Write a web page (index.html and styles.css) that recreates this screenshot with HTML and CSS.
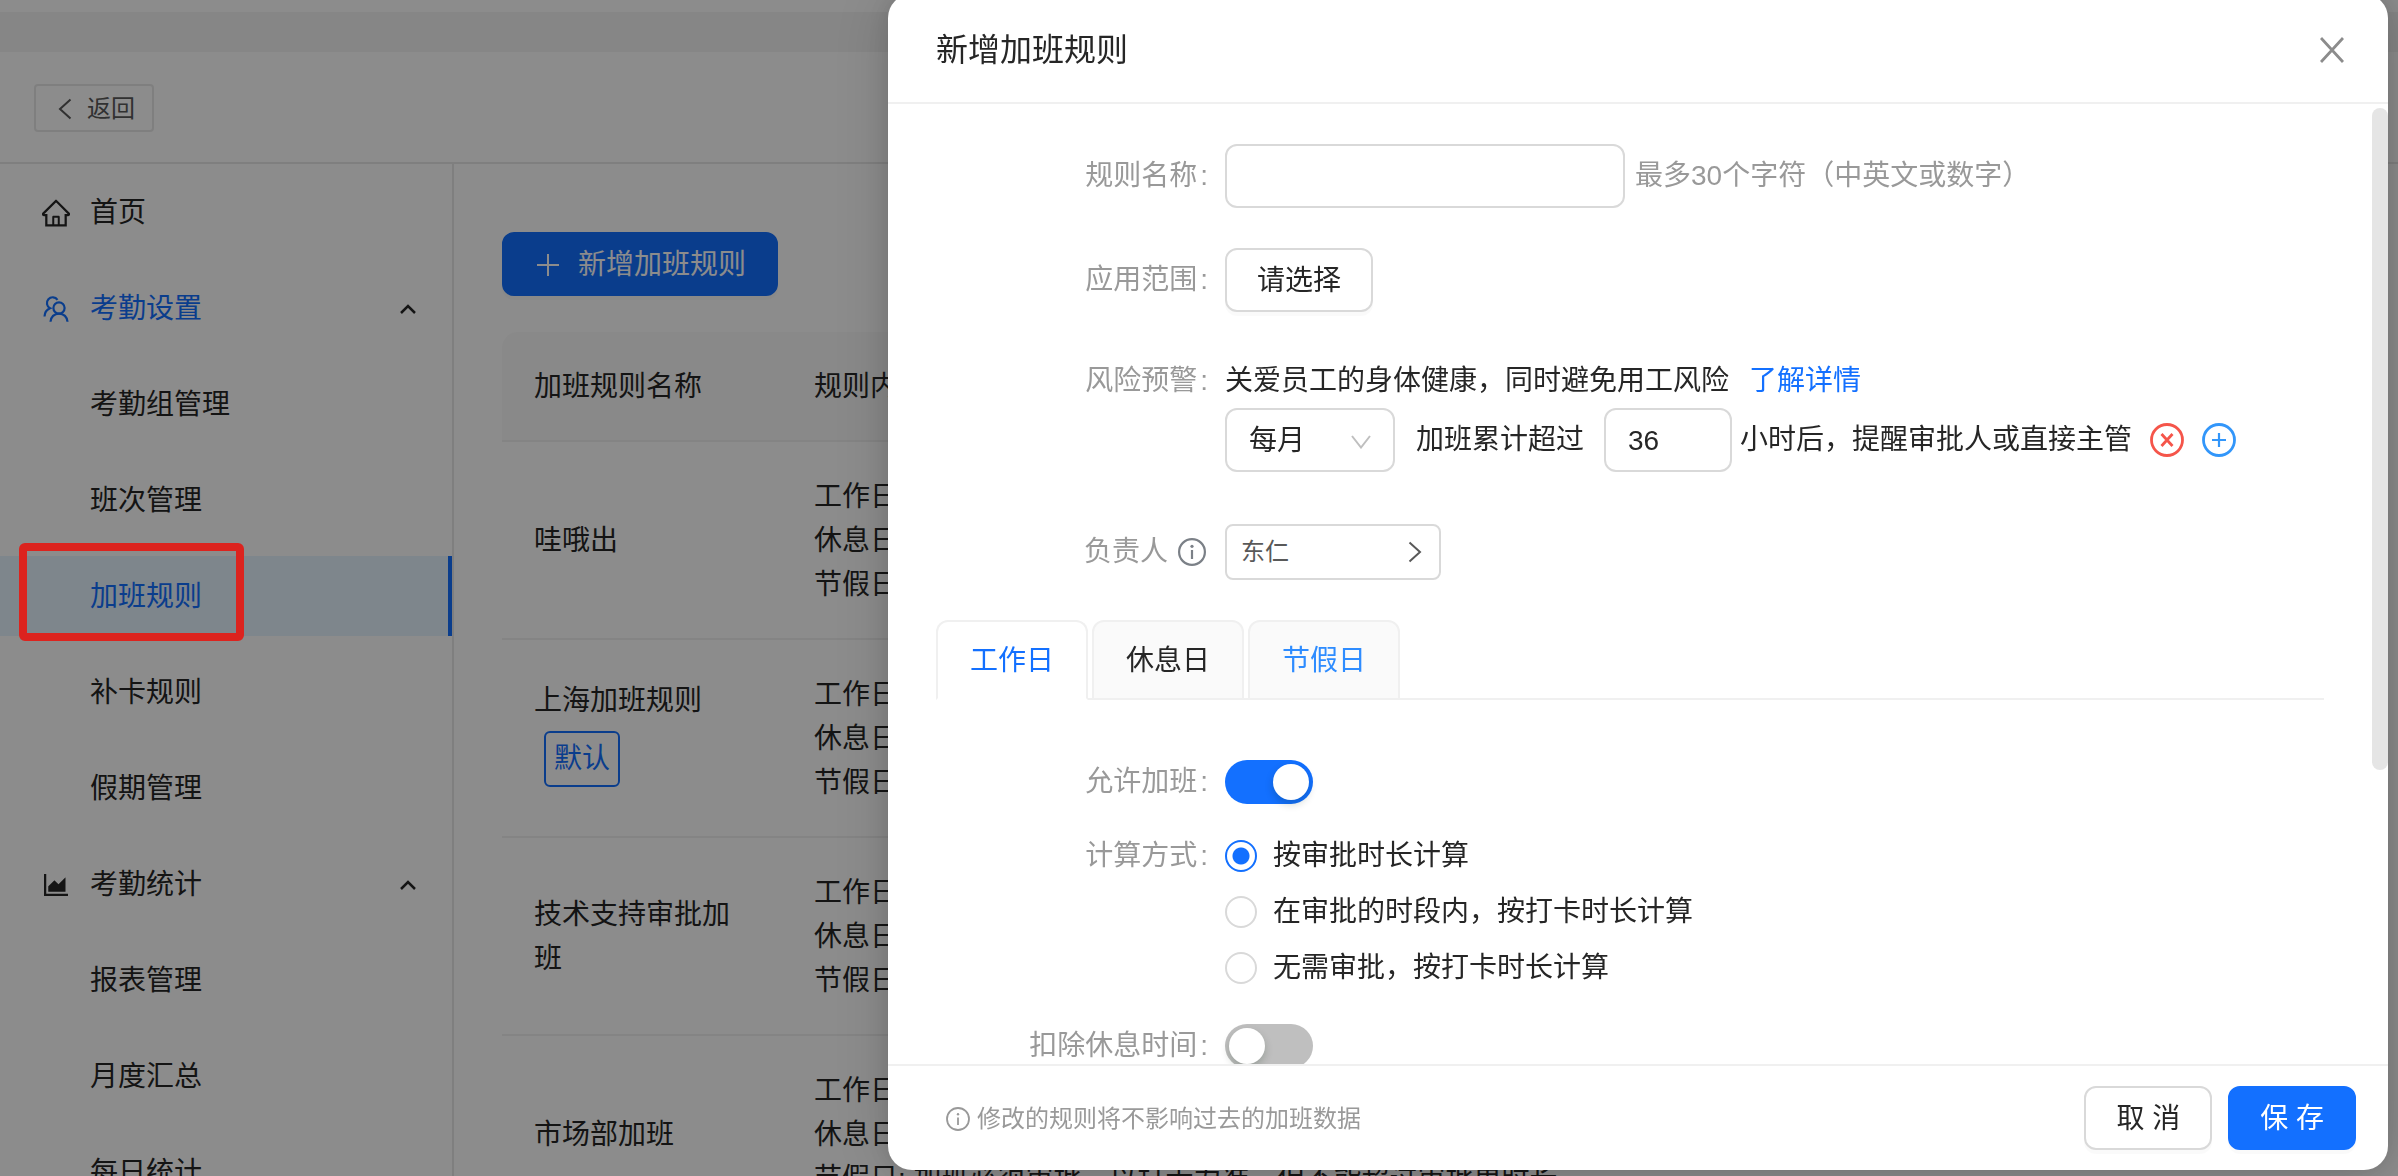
FILE: index.html
```html
<!DOCTYPE html>
<html lang="zh-CN">
<head>
<meta charset="utf-8">
<meta name="viewport" content="width=device-width, initial-scale=1">
<title>新增加班规则</title>
<link rel="stylesheet" href="styles.css">
</head>
<body>
<div class="app">
  <div class="app-strip"></div>
  <header class="app-header">
    <button class="back-btn" type="button">
      <svg width="14" height="22" viewBox="0 0 14 22" fill="none" stroke="currentColor" stroke-width="2"><path d="M12.500 1.500 2 11l10.500 9.500"/></svg>
      <span>返回</span>
    </button>
  </header>
  <div class="app-main">
    <nav class="sidebar">
      <a class="menu-item" href="#">
        <svg class="menu-icon" viewBox="64 64 896 896" fill="currentColor"><path d="M946.5 505L560.1 118.800l-25.900-25.900a31.500 31.500 0 0 0-44.400 0L77.500 505a63.900 63.900 0 0 0-18.800 46c.4 35.200 29.700 63.300 64.900 63.300h42.500V940h691.800V614.300h43.400c17.100 0 33.200-6.700 45.300-18.800a63.600 63.600 0 0 0 18.700-45.300c0-17-6.700-33.100-18.800-45.200zM568 868H456V664h112v204zm217.900-325.700V868H632V640c0-22.100-17.900-40-40-40H432c-22.100 0-40 17.900-40 40v228H238.100V542.300h-96l370-369.700 23.100 23.100L882 542.300h-96.100z"/></svg>
        <span>首页</span>
      </a>
      <a class="menu-item menu-open" href="#">
        <svg class="menu-icon" viewBox="0 0 28 28" fill="none" stroke="currentColor" stroke-width="2.200"><path d="M15.500 4.800A5.800 5.800 0 1 0 8 13.200C4.800 14.500 2.700 17.300 2.500 21.500"/><circle cx="17" cy="13" r="5.600"/><path d="M8.500 26.800c.3-4.800 3.700-8.200 8.500-8.200s8.200 3.400 8.500 8.200"/></svg>
        <span>考勤设置</span>
        <svg class="menu-arrow" viewBox="0 0 16 10" fill="none" stroke="currentColor" stroke-width="2.500"><path d="m1 9 7-7 7 7"/></svg>
      </a>
      <a class="menu-item menu-sub" href="#">考勤组管理</a>
      <a class="menu-item menu-sub" href="#">班次管理</a>
      <a class="menu-item menu-sub menu-selected" href="#">加班规则</a>
      <a class="menu-item menu-sub" href="#">补卡规则</a>
      <a class="menu-item menu-sub" href="#">假期管理</a>
      <a class="menu-item" href="#">
        <svg class="menu-icon" viewBox="64 64 896 896" fill="currentColor"><path d="M888 792H200V168c0-4.400-3.600-8-8-8h-56c-4.400 0-8 3.600-8 8v688c0 4.400 3.600 8 8 8h752c4.400 0 8-3.600 8-8v-56c0-4.400-3.600-8-8-8zm-616-64h536c4.400 0 8-3.600 8-8V284c0-7.200-8.700-10.700-13.700-5.700L592 488.600l-125.400-124a8.030 8.030 0 0 0-11.300 0l-189 189.600a7.870 7.870 0 0 0-2.300 5.600V720c0 4.400 3.600 8 8 8z"/></svg>
        <span>考勤统计</span>
        <svg class="menu-arrow" viewBox="0 0 16 10" fill="none" stroke="currentColor" stroke-width="2.500"><path d="m1 9 7-7 7 7"/></svg>
      </a>
      <a class="menu-item menu-sub" href="#">报表管理</a>
      <a class="menu-item menu-sub" href="#">月度汇总</a>
      <a class="menu-item menu-sub" href="#">每日统计</a>
    </nav>
    <main class="content">
      <button class="btn btn-primary add-btn" type="button">
        <svg width="24" height="24" viewBox="0 0 24 24" fill="none" stroke="currentColor" stroke-width="2"><path d="M12 1v22M1 12h22"/></svg>
        <span>新增加班规则</span>
      </button>
      <table class="rules">
        <thead>
          <tr><th class="col-name">加班规则名称</th><th>规则内容</th></tr>
        </thead>
        <tbody>
          <tr><td>哇哦出</td><td>工作日: 加班必须审批<br>休息日: 加班必须审批<br>节假日: 加班必须审批</td></tr>
          <tr><td>上海加班规则<span class="tag">默认</span></td><td>工作日: 加班必须审批<br>休息日: 加班必须审批<br>节假日: 加班必须审批</td></tr>
          <tr><td>技术支持审批加班</td><td>工作日: 加班必须审批<br>休息日: 加班必须审批<br>节假日: 加班必须审批</td></tr>
          <tr><td>市场部加班</td><td>工作日: 加班必须审批<br>休息日: 加班必须审批<br>节假日: 加班必须审批，以打卡为准，但不能超过审批单时长</td></tr>
        </tbody>
      </table>
    </main>
  </div>
</div>
<div class="mask"></div>
<div class="highlight"></div>

<section class="drawer" role="dialog" aria-labelledby="drawer-title">
  <header class="drawer-header">
    <h1 id="drawer-title">新增加班规则</h1>
    <button class="close-btn" type="button" aria-label="关闭">
      <svg width="24" height="26" viewBox="0 0 24 26" fill="none" stroke="currentColor" stroke-width="2.800"><path d="m1 1 22 24M23 1 1 25"/></svg>
    </button>
  </header>
  <form class="drawer-body">
    <div class="form-row row-name">
      <label class="form-label" for="rule-name">规则名称<span class="colon">:</span></label>
      <div class="form-control">
        <input class="field name-field" id="rule-name" type="text" maxlength="30">
        <span class="hint">最多30个字符（中英文或数字）</span>
      </div>
    </div>
    <div class="form-row row-scope">
      <label class="form-label" for="scope">应用范围<span class="colon">:</span></label>
      <div class="form-control"><button class="btn" id="scope" type="button">请选择</button></div>
    </div>
    <div class="form-row row-risk">
      <span class="form-label">风险预警<span class="colon">:</span></span>
      <div class="risk">
        <p>关爱员工的身体健康，同时避免用工风险<a class="learn-more" href="#">了解详情</a></p>
        <div class="risk-line">
          <div class="select-wrap">
            <select class="field period" aria-label="周期"><option>每月</option></select>
            <svg class="select-arrow" width="20" height="14" viewBox="0 0 20 14" fill="none" stroke="currentColor" stroke-width="2"><path d="m1 1 9 11.500L19 1"/></svg>
          </div>
          <label for="hours">加班累计超过</label>
          <input class="field hours" id="hours" type="text" value="36">
          <span class="risk-tail">小时后，提醒审批人或直接主管</span>
          <button class="icon-btn icon-remove" type="button" aria-label="删除">
            <svg width="34" height="34" viewBox="0 0 34 34" fill="none" stroke="currentColor" stroke-width="2.800"><circle cx="17" cy="17" r="15.500"/><path d="m11.500 11 11 12M22.500 11l-11 12"/></svg>
          </button>
          <button class="icon-btn icon-add" type="button" aria-label="添加">
            <svg width="34" height="34" viewBox="0 0 34 34" fill="none" stroke="currentColor" stroke-width="2.800"><circle cx="17" cy="17" r="15.500"/><path d="M17 10v14M10 17h14" stroke-width="2.200"/></svg>
          </button>
        </div>
      </div>
    </div>
    <div class="form-row row-owner">
      <label class="form-label" for="owner">负责人
        <svg class="owner-info" width="28" height="28" viewBox="0 0 28 28" fill="none" stroke="currentColor" stroke-width="2.200"><circle cx="14" cy="14" r="12.900"/><path d="M14 12v9"/><circle cx="14" cy="8.300" r="1.600" fill="currentColor" stroke="none"/></svg>
      </label>
      <div class="form-control">
        <button class="owner-btn" id="owner" type="button"><span>东仁</span>
          <svg width="14" height="22" viewBox="0 0 14 22" fill="none" stroke="currentColor" stroke-width="2"><path d="M1.500 1.500 12 11 1.500 20.500"/></svg>
        </button>
      </div>
    </div>

    <div class="tabs" role="tablist">
      <button class="tab tab-active" role="tab" aria-selected="true" type="button">工作日</button>
      <button class="tab" role="tab" type="button">休息日</button>
      <button class="tab tab-hover" role="tab" type="button">节假日</button>
    </div>

    <div class="form-row row-allow">
      <label class="form-label" for="allow">允许加班<span class="colon">:</span></label>
      <div class="form-control"><input class="switch" id="allow" type="checkbox" checked></div>
    </div>
    <div class="form-row row-method">
      <span class="form-label">计算方式<span class="colon">:</span></span>
      <div class="radios">
        <label class="radio"><input type="radio" name="method" checked><span>按审批时长计算</span></label>
        <label class="radio"><input type="radio" name="method"><span>在审批的时段内，按打卡时长计算</span></label>
        <label class="radio"><input type="radio" name="method"><span>无需审批，按打卡时长计算</span></label>
      </div>
    </div>
    <div class="form-row row-rest">
      <label class="form-label" for="rest">扣除休息时间<span class="colon">:</span></label>
      <div class="form-control"><input class="switch" id="rest" type="checkbox"></div>
    </div>
    <div class="scroll-thumb"></div>
  </form>
  <footer class="drawer-footer">
    <p class="notice">
      <svg width="24" height="24" viewBox="0 0 24 24" fill="none" stroke="currentColor" stroke-width="1.800"><circle cx="12" cy="12" r="11"/><path d="M12 10.500V18"/><circle cx="12" cy="7.200" r="1.200" fill="currentColor" stroke="none"/></svg>
      <span>修改的规则将不影响过去的加班数据</span>
    </p>
    <button class="btn" type="button">取 消</button>
    <button class="btn btn-primary" type="button">保 存</button>
  </footer>
</section>
</body>
</html>
```
FILE: styles.css
```css
*,
*::before,
*::after {
  box-sizing: border-box;
}

:root {
  --blue: #1370ff;
  --text: #262626;
  --muted: #999;
  --line: #f0f0f0;
  --border: #d9d9d9;
}

html,
body {
  height: 100%;
}

body {
  margin: 0;
  overflow: hidden;
  color: var(--text);
  font: 28px/44px "Liberation Sans", "Noto Sans CJK SC", sans-serif;
}

button,
input,
select {
  font: inherit;
  color: inherit;
}

button {
  cursor: pointer;
}

a {
  color: inherit;
  text-decoration: none;
}

p,
h1 {
  margin: 0;
}

svg {
  display: block;
  flex: none;
}

/* Page behind the drawer */
.app {
  display: flex;
  flex-direction: column;
  height: 100%;
  padding-top: 12px;
  overflow: hidden;
}

.app-strip {
  flex: none;
  height: 40px;
  background: #f4f4f4;
}

.app-header {
  flex: none;
  display: flex;
  align-items: center;
  height: 112px;
  padding: 2px 34px 0;
  border-bottom: 2px solid #e8e8e8;
}

.back-btn {
  display: flex;
  align-items: center;
  gap: 15px;
  height: 48px;
  padding: 2px 17px 0 22px;
  border: 2px solid #e8e8e8;
  border-radius: 4px;
  background: none;
  color: #595959;
  font-size: 24px;
  line-height: 40px;
}

.app-main {
  flex: 1;
  display: flex;
  min-height: 0;
}

.sidebar {
  flex: none;
  display: flex;
  flex-direction: column;
  gap: 16px;
  width: 454px;
  padding-top: 8px;
  border-right: 2px solid #e8e8e8;
}

.menu-item {
  flex: none;
  display: flex;
  align-items: center;
  height: 80px;
  padding: 2px 36px 0 42px;
}

.menu-icon {
  width: 28px;
  height: 28px;
  margin-right: 20px;
}

.menu-arrow {
  width: 16px;
  height: 10px;
  margin-left: auto;
  color: var(--text);
}

.menu-sub {
  padding-left: 90px;
}

.menu-open {
  color: var(--blue);
}

.menu-selected {
  border-right: 4px solid var(--blue);
  background: #e6f4ff;
  color: var(--blue);
}

.content {
  flex: 1;
  min-width: 0;
  padding: 68px 48px 0;
}

.btn {
  display: inline-flex;
  align-items: center;
  justify-content: center;
  height: 64px;
  padding: 2px 30px 0;
  border: 2px solid var(--border);
  border-radius: 12px;
  background: #fff;
  box-shadow: 0 4px 0 rgba(0, 0, 0, 0.02);
}

.btn-primary {
  border-color: var(--blue);
  background: var(--blue);
  color: #fff;
}

.add-btn {
  gap: 18px;
  padding: 2px 30px 0 32px;
}

.rules {
  width: 100%;
  margin-top: 36px;
  border-spacing: 0;
  table-layout: fixed;
}

.rules th,
.rules td {
  padding: 33px 32px 31px;
  border-bottom: 2px solid var(--line);
  font-weight: 400;
  text-align: left;
}

.rules th {
  background: #fafafa;
}

.rules th:first-child {
  border-top-left-radius: 16px;
}

.rules .col-name {
  width: 280px;
}

.tag {
  display: block;
  width: 76px;
  height: 56px;
  margin: 8px 10px 12px;
  border: 2px solid var(--blue);
  border-radius: 6px;
  color: var(--blue);
  line-height: 52px;
  text-align: center;
}

.mask {
  position: fixed;
  inset: 0;
  background: rgba(0, 0, 0, 0.45);
}

/* Marker frame around the selected menu item */
.highlight {
  position: absolute;
  top: 543px;
  left: 19px;
  width: 225px;
  height: 98px;
  border: 8px solid #dc231e;
  border-radius: 6px;
}

/* Drawer */
.drawer {
  position: fixed;
  top: -6px;
  right: 10px;
  bottom: 6px;
  display: flex;
  flex-direction: column;
  width: 1500px;
  max-width: calc(100% - 20px);
  border-radius: 24px;
  background: #fff;
  box-shadow: 0 0 64px rgba(0, 0, 0, 0.16), 0 0 24px rgba(0, 0, 0, 0.12);
  overflow: hidden;
}

.drawer-header {
  flex: none;
  display: flex;
  align-items: center;
  justify-content: space-between;
  height: 110px;
  padding: 3px 44px 0 48px;
  border-bottom: 2px solid var(--line);
}

.drawer-header h1 {
  font-size: 32px;
  font-weight: 400;
}

.close-btn,
.icon-btn {
  padding: 0;
  border: 0;
  background: none;
}

.close-btn {
  color: #8c8c8c;
}

.drawer-body {
  position: relative;
  flex: 1;
  min-height: 0;
  padding: 40px 64px 0 48px;
  overflow: hidden;
}

.scroll-thumb {
  position: absolute;
  top: 4px;
  right: 0;
  width: 16px;
  height: 69%;
  border-radius: 8px;
  background: #e5e5e5;
}

.form-row {
  display: grid;
  grid-template-columns: 289px 1fr;
}

.form-label {
  display: flex;
  align-items: center;
  justify-content: flex-end;
  color: var(--muted);
}

.colon {
  margin: 0 17px 0 3px;
}

.form-control {
  display: flex;
  align-items: center;
}

.field {
  height: 64px;
  padding: 2px 22px 0;
  border: 2px solid var(--border);
  border-radius: 12px;
  background: #fff;
  outline: 0;
}

.name-field {
  width: 400px;
}

.hint {
  margin-left: 10px;
  color: var(--muted);
}

.row-scope {
  margin-top: 40px;
}

.row-risk {
  align-items: start;
  margin-top: 47px;
}

.learn-more {
  margin-left: 20px;
  color: var(--blue);
}

.risk-line {
  display: flex;
  align-items: center;
  margin-top: 5px;
}

.select-wrap {
  position: relative;
  margin-right: 21px;
}

.period {
  display: block;
  width: 170px;
  appearance: none;
}

.select-arrow {
  position: absolute;
  top: 27px;
  right: 24px;
  color: #bfbfbf;
  pointer-events: none;
}

.hours {
  width: 128px;
  margin: 0 8px 0 20px;
}

.icon-btn {
  margin-left: 18px;
}

.icon-remove {
  color: #f5554a;
}

.icon-add {
  color: #3296fa;
}

.row-owner {
  margin-top: 52px;
}

.owner-info {
  margin: 0 19px 0 10px;
  color: #7b8087;
}

.owner-btn {
  display: flex;
  align-items: center;
  justify-content: space-between;
  width: 216px;
  height: 56px;
  padding: 0 17px 0 14px;
  border: 2px solid var(--border);
  border-radius: 8px;
  background: #fff;
  color: #595959;
  font-size: 24px;
}

.tabs {
  display: flex;
  gap: 4px;
  margin: 40px 0 60px;
  box-shadow: inset 0 -2px 0 var(--line);
}

.tab {
  width: 152px;
  height: 80px;
  padding: 2px 0 0;
  border: 2px solid var(--line);
  border-radius: 12px 12px 0 0;
  background: #fafafa;
}

.tab-active {
  border-bottom-color: #fff;
  background: #fff;
  color: var(--blue);
}

.tab-hover {
  color: #2e8cff;
}

.switch {
  width: 88px;
  height: 44px;
  margin: 0;
  padding: 4px;
  border-radius: 22px;
  background: #bfbfbf;
  appearance: none;
}

.switch::before {
  content: "";
  display: block;
  width: 36px;
  height: 36px;
  border-radius: 50%;
  background: #fff;
  box-shadow: 0 4px 8px rgba(0, 35, 11, 0.2);
}

.switch:checked {
  background: var(--blue);
}

.switch:checked::before {
  margin-left: auto;
}

.row-method {
  align-items: start;
  margin-top: 30px;
}

.radios {
  display: flex;
  flex-direction: column;
  gap: 12px;
}

.radio {
  display: flex;
  align-items: center;
  gap: 16px;
}

.radio input {
  width: 32px;
  height: 32px;
  margin: 0;
  border: 2px solid var(--border);
  border-radius: 50%;
  background: #fff;
  appearance: none;
}

.radio input:checked {
  border-color: var(--blue);
  background: radial-gradient(circle, var(--blue) 8px, #fff 9px);
}

.row-rest {
  margin-top: 34px;
}

.drawer-footer {
  flex: none;
  display: flex;
  align-items: center;
  gap: 16px;
  height: 106px;
  padding: 0 32px 0 58px;
  border-top: 2px solid var(--line);
}

.notice {
  display: flex;
  align-items: center;
  gap: 7px;
  margin-right: auto;
  padding-top: 2px;
  color: var(--muted);
  font-size: 24px;
}
```
